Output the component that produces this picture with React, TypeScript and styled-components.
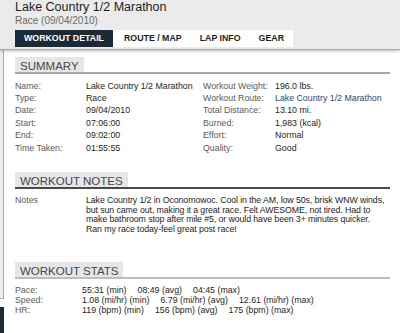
import React from 'react';
import styled, { createGlobalStyle } from 'styled-components';

const GlobalStyle = createGlobalStyle`
  html, body {
    margin: 0;
    padding: 0;
    background: #ffffff;
  }
  body {
    font-family: "Liberation Sans", Arial, sans-serif;
  }
`

const Page = styled.div`
  width: 400px;
  height: 333px;
  overflow: hidden;
  display: flex;
  flex-direction: column;
  background: #fff;
`

const Header = styled.header`
  position: relative;
  z-index: 1;
  flex: none;
  height: 49px;
  padding-left: 15px;
  background: #ebebeb;
  border-bottom: 1px solid #a9a9a9;
  box-shadow: 0 1px 3px rgba(0, 0, 0, 0.28);
`

const Title = styled.h1`
  margin: 0;
  font-size: 12.5px;
  line-height: 15px;
  font-weight: normal;
  color: #1e1e1e;
`

const Subtitle = styled.div`
  font-size: 10px;
  line-height: 12px;
  color: #6a6a6a;
`

const Tabs = styled.nav`
  display: flex;
  margin-top: 3px;
  height: 17px;
`

const Tab = styled.div<{ $active?: boolean }>`
  padding: 0 9px;
  font-size: 8.8px;
  font-weight: bold;
  line-height: 17px;
  color: ${({ $active }) => ($active ? '#ffffff' : '#1d1d1d')};
  background: ${({ $active }) => ($active ? '#1b2a38' : '#ffffff')};
`

const WhiteTabs = styled.div`
  display: flex;
  padding-left: 2px;
  background: #fff;
`

const Body = styled.div`
  flex: 1;
  display: flex;
  min-height: 0;
`

const Edge = styled.div`
  flex: none;
  width: 4px;
  display: flex;
  flex-direction: column;
`

const EdgeTop = styled.div`
  height: 248px;
  background: #ececec;
  border-right: 1px solid #a8a8a8;
  border-bottom: 1px solid #a8a8a8;
`

const EdgeGap = styled.div`
  height: 8px;
`

const EdgeDark = styled.div`
  flex: 1;
  background: #1c2a36;
`

const Main = styled.main`
  flex: 1;
  padding: 7px 10px 0 11px;
  font-size: 8.8px;
  color: #1e1e1e;
`

const Section = styled.section<{ $gap: number }>`
  margin-top: ${({ $gap }) => $gap}px;
`

const SectionHead = styled.div<{ $line: string }>`
  display: flex;
  border-bottom: 2px solid ${({ $line }) => $line};
`

const HeadTab = styled.h2`
  margin: 0;
  box-sizing: border-box;
  height: 15px;
  padding: 3px 5px 0;
  font-size: 11.5px;
  line-height: 12px;
  font-weight: normal;
  color: #474747;
  background: #e6e6e6;
`

const SummaryGrid = styled.div`
  display: grid;
  grid-template-columns: 71px 117px 72px 1fr;
  grid-auto-rows: 12.4px;
  align-items: center;
  margin-top: 5.5px;
  white-space: nowrap;
`

const Label = styled.span`
  color: #5a5a5a;
`

const Value = styled.span`
  color: #1e1e1e;
`

const Link = styled.a`
  color: #24478a;
  text-decoration: none;
`

const NotesRow = styled.div`
  display: grid;
  grid-template-columns: 71px 1fr;
  margin-top: 7px;
  line-height: 9.7px;
`

const NotesText = styled.div`
  white-space: nowrap;
  letter-spacing: -0.1px;
  color: #1e1e1e;
`

const StatsList = styled.div`
  margin-top: 6px;
`

const StatRow = styled.div`
  display: flex;
  height: 10.2px;
  align-items: center;
  white-space: nowrap;
`

const StatLabel = styled(Label)`
  width: 67px;
  flex: none;
`

const StatValues = styled.div`
  display: flex;
  gap: 11px;
`

const summary: [string, React.ReactNode, string, React.ReactNode][] = [
  ['Name:', 'Lake Country 1/2 Marathon', 'Workout Weight:', '196.0 lbs.'],
  ['Type:', 'Race', 'Workout Route:', <Link href="#">Lake Country 1/2 Marathon</Link>],
  ['Date:', '09/04/2010', 'Total Distance:', '13.10 mi.'],
  ['Start:', '07:06:00', 'Burned:', '1,983 (kcal)'],
  ['End:', '09:02:00', 'Effort:', 'Normal'],
  ['Time Taken:', '01:55:55', 'Quality:', 'Good'],
];

const notes = [
  'Lake Country 1/2 in Oconomowoc. Cool in the AM, low 50s, brisk WNW winds,',
  'but sun came out, making it a great race. Felt AWESOME, not tired. Had to',
  'make bathroom stop after mile #5, or would have been 3+ minutes quicker.',
  'Ran my race today-feel great post race!',
];

const stats: [string, string[]][] = [
  ['Pace:', ['55:31 (min)', '08:49 (avg)', '04:45 (max)']],
  ['Speed:', ['1.08 (mi/hr) (min)', '6.79 (mi/hr) (avg)', '12.61 (mi/hr) (max)']],
  ['HR:', ['119 (bpm) (min)', '156 (bpm) (avg)', '175 (bpm) (max)']],
];

const App: React.FC = () => {
  return (
    <Page>
      <GlobalStyle />
      <Header>
        <Title>Lake Country 1/2 Marathon</Title>
        <Subtitle>Race (09/04/2010)</Subtitle>
        <Tabs>
          <Tab $active>WORKOUT DETAIL</Tab>
          <WhiteTabs>
            <Tab>ROUTE / MAP</Tab>
            <Tab>LAP INFO</Tab>
            <Tab>GEAR</Tab>
          </WhiteTabs>
        </Tabs>
      </Header>
      <Body>
        <Edge>
          <EdgeTop />
          <EdgeGap />
          <EdgeDark />
        </Edge>
        <Main>
          <Section $gap={0}>
            <SectionHead $line="#a6a6a6">
              <HeadTab>SUMMARY</HeadTab>
            </SectionHead>
            <SummaryGrid>
              {summary.map(([l1, v1, l2, v2]) => (
                <React.Fragment key={l1}>
                  <Label>{l1}</Label>
                  <Value>{v1}</Value>
                  <Label>{l2}</Label>
                  <Value>{v2}</Value>
                </React.Fragment>
              ))}
            </SummaryGrid>
          </Section>

          <Section $gap={18}>
            <SectionHead $line="#4a4a4a">
              <HeadTab>WORKOUT NOTES</HeadTab>
            </SectionHead>
            <NotesRow>
              <Label>Notes</Label>
              <NotesText>
                {notes.map((line) => (
                  <div key={line}>{line}</div>
                ))}
              </NotesText>
            </NotesRow>
          </Section>

          <Section $gap={27}>
            <SectionHead $line="#bdbdbd">
              <HeadTab>WORKOUT STATS</HeadTab>
            </SectionHead>
            <StatsList>
              {stats.map(([label, values]) => (
                <StatRow key={label}>
                  <StatLabel>{label}</StatLabel>
                  <StatValues>
                    {values.map((v) => (
                      <span key={v}>{v}</span>
                    ))}
                  </StatValues>
                </StatRow>
              ))}
            </StatsList>
          </Section>
        </Main>
      </Body>
    </Page>
  );
}

export default App;
